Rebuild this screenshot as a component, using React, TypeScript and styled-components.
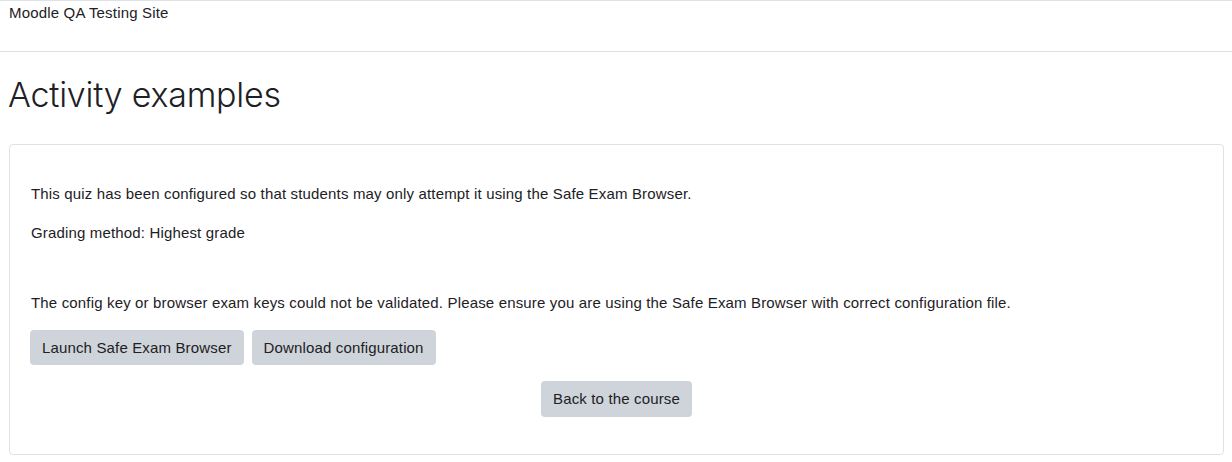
import React from "react";
import styled, { createGlobalStyle } from "styled-components";

const Global = createGlobalStyle`
  html, body { margin: 0; padding: 0; background: #fff; }
  body {
    font-family: "Liberation Sans", Arial, sans-serif;
    font-size: 15px;
    line-height: 1.5;
    color: #1d2125;
  }
`;

const Navbar = styled.header`
  height: 50px;
  border-top: 1px solid #dee2e6;
  border-bottom: 1px solid #dee2e6;
  padding: 0 9px;
  display: flex;
  align-items: flex-start;
`;

const SiteName = styled.div`
  font-size: 15px;
  line-height: 22px;
  margin-top: 1px;
  letter-spacing: 0.18px;
`;

const Page = styled.main`
  padding: 0 8px 0 9px;
`;

const Heading = styled.h1`
  margin: 22px 0 0 -1px;
  font-family: Inter, "Liberation Sans", sans-serif;
  font-weight: 300;
  font-size: 34px;
  line-height: 42px;
  height: 42px;
  letter-spacing: -0.25px;
`;

const Card = styled.section`
  margin-top: 28px;
  border: 1px solid #dee2e6;
  border-radius: 4px;
  padding: 38px 20px 36px 20px;
  box-sizing: border-box;
  height: 311px;
`;

const Para = styled.p<{ $gap?: number }>`
  margin: 0;
  margin-top: ${(p) => p.$gap ?? 0}px;
  line-height: 22px;
  letter-spacing: 0.16px;
  padding-left: 1px;
`;

const ButtonRow = styled.div<{ $center?: boolean; $gap: number }>`
  display: flex;
  gap: 8px;
  margin-top: ${(p) => p.$gap}px;
  justify-content: ${(p) => (p.$center ? "center" : "flex-start")};
`;

const Button = styled.button<{ $h: number }>`
  font-family: inherit;
  font-size: 15px;
  color: #1d2125;
  background: #ced4da;
  border: none;
  border-radius: 4px;
  height: ${(p) => p.$h}px;
  padding: 0 12px;
  line-height: 22px;
  letter-spacing: 0.15px;
  cursor: pointer;
`;

export default function App() {
  return (
    <>
      <Global />
      <Navbar>
        <SiteName>Moodle QA Testing Site</SiteName>
      </Navbar>
      <Page>
        <Heading>Activity examples</Heading>
        <Card>
          <Para>
            This quiz has been configured so that students may only attempt it using the Safe Exam Browser.
          </Para>
          <Para $gap={17}>Grading method: Highest grade</Para>
          <Para $gap={48}>
            The config key or browser exam keys could not be validated. Please ensure you are using the Safe Exam
            Browser with correct configuration file.
          </Para>
          <ButtonRow $gap={16}>
            <Button $h={35}>Launch Safe Exam Browser</Button>
            <Button $h={35}>Download configuration</Button>
          </ButtonRow>
          <ButtonRow $center $gap={16}>
            <Button $h={36}>Back to the course</Button>
          </ButtonRow>
        </Card>
      </Page>
    </>
  );
}
